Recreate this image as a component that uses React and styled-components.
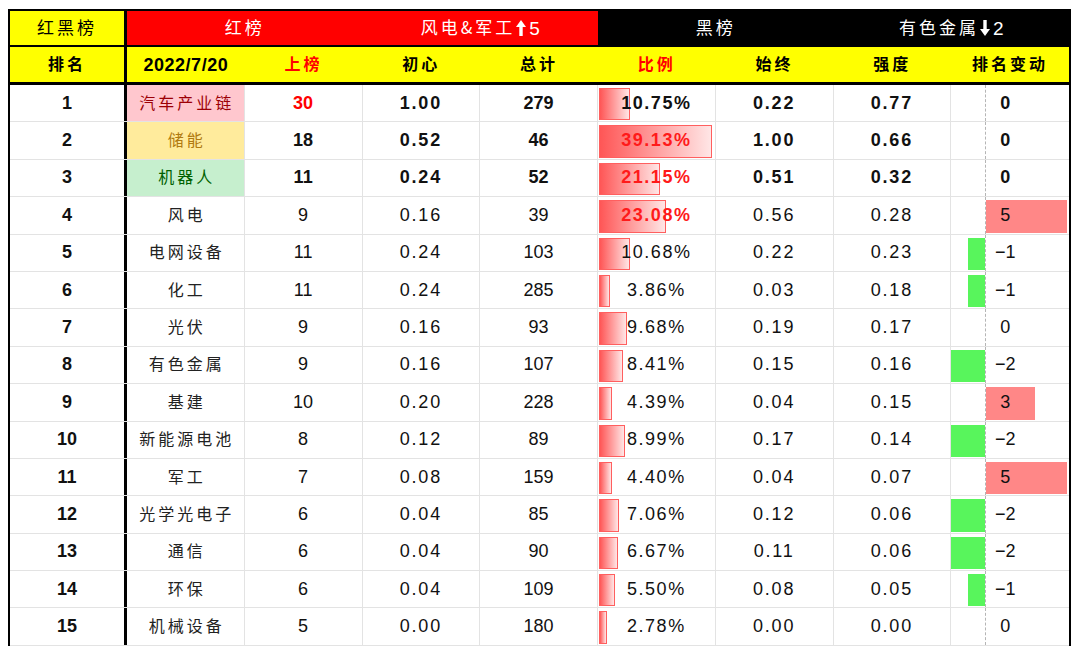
import React from 'react';
import styled, {createGlobalStyle} from 'styled-components';

const GlobalStyle = createGlobalStyle`
  body {
    margin: 0;
    background: #fff;
    font-family: "Liberation Sans", "Noto Sans CJK SC", sans-serif;
  }
`

const COLS = '117px repeat(8, 117.75px)'

const rows = [
    {rank: 1, name: '汽车产业链', tone: 'pink', up: 30, chu: '1.00', total: 279, pct: '10.75', shi: '0.22', qiang: '0.77', chg: 0},
    {rank: 2, name: '储能', tone: 'yellow', up: 18, chu: '0.52', total: 46, pct: '39.13', shi: '1.00', qiang: '0.66', chg: 0},
    {rank: 3, name: '机器人', tone: 'green', up: 11, chu: '0.24', total: 52, pct: '21.15', shi: '0.51', qiang: '0.32', chg: 0},
    {rank: 4, name: '风电', up: 9, chu: '0.16', total: 39, pct: '23.08', shi: '0.56', qiang: '0.28', chg: 5},
    {rank: 5, name: '电网设备', up: 11, chu: '0.24', total: 103, pct: '10.68', shi: '0.22', qiang: '0.23', chg: -1},
    {rank: 6, name: '化工', up: 11, chu: '0.24', total: 285, pct: '3.86', shi: '0.03', qiang: '0.18', chg: -1},
    {rank: 7, name: '光伏', up: 9, chu: '0.16', total: 93, pct: '9.68', shi: '0.19', qiang: '0.17', chg: 0},
    {rank: 8, name: '有色金属', up: 9, chu: '0.16', total: 107, pct: '8.41', shi: '0.15', qiang: '0.16', chg: -2},
    {rank: 9, name: '基建', up: 10, chu: '0.20', total: 228, pct: '4.39', shi: '0.04', qiang: '0.15', chg: 3},
    {rank: 10, name: '新能源电池', up: 8, chu: '0.12', total: 89, pct: '8.99', shi: '0.17', qiang: '0.14', chg: -2},
    {rank: 11, name: '军工', up: 7, chu: '0.08', total: 159, pct: '4.40', shi: '0.04', qiang: '0.07', chg: 5},
    {rank: 12, name: '光学光电子', up: 6, chu: '0.04', total: 85, pct: '7.06', shi: '0.12', qiang: '0.06', chg: -2},
    {rank: 13, name: '通信', up: 6, chu: '0.04', total: 90, pct: '6.67', shi: '0.11', qiang: '0.06', chg: -2},
    {rank: 14, name: '环保', up: 6, chu: '0.04', total: 109, pct: '5.50', shi: '0.08', qiang: '0.05', chg: -1},
    {rank: 15, name: '机械设备', up: 5, chu: '0.00', total: 180, pct: '2.78', shi: '0.00', qiang: '0.00', chg: 0},
]

const tones = {
    pink: {bg: '#ffc7ce', fg: '#9c0006'},
    yellow: {bg: '#ffeb9c', fg: '#b07a10'},
    green: {bg: '#c6efce', fg: '#006100'},
}

// thick arrow used in the title row
const Arrow = ({down}) => (
    <ArrowSvg viewBox="0 0 10 16" width="10" height="16">
        <g transform={down ? 'rotate(180 5 8)' : undefined} fill="#fff">
            <polygon points="0,7 5,0 10,7"/>
            <rect x="3.3" y="6" width="3.4" height="10"/>
        </g>
    </ArrowSvg>
)

const App = () => {
    return (
        <Page>
            <GlobalStyle/>
            <Table>
                <TitleRow>
                    <TitleCell bg="#ffff00" fg="#000" first>红黑榜</TitleCell>
                    <TitleCell bg="#ff0000" fg="#fff">红榜</TitleCell>
                    <TitleCell bg="#ff0000" fg="#fff">风电&amp;军工<Arrow/><Digit>5</Digit></TitleCell>
                    <TitleCell bg="#000" fg="#fff">黑榜</TitleCell>
                    <TitleCell bg="#000" fg="#fff">有色金属<Arrow down/><Digit>2</Digit></TitleCell>
                </TitleRow>
                <HeadRow>
                    <HeadCell first>排名</HeadCell>
                    <HeadCell latin>2022/7/20</HeadCell>
                    <HeadCell red>上榜</HeadCell>
                    <HeadCell>初心</HeadCell>
                    <HeadCell>总计</HeadCell>
                    <HeadCell red>比例</HeadCell>
                    <HeadCell>始终</HeadCell>
                    <HeadCell>强度</HeadCell>
                    <HeadCell>排名变动</HeadCell>
                </HeadRow>
                {rows.map(row => {
                    const strong = row.rank <= 3
                    const tone = tones[row.tone]
                    return (
                        <Row key={row.rank}>
                            <RankCell>{row.rank}</RankCell>
                            <NameCell bg={tone ? tone.bg : '#fff'} fg={tone ? tone.fg : '#222'}>
                                {row.name}
                            </NameCell>
                            <NumCell strong={strong} red={row.rank === 1}>{row.up}</NumCell>
                            <NumCell strong={strong} spaced>{row.chu}</NumCell>
                            <NumCell strong={strong}>{row.total}</NumCell>
                            <RatioCell>
                                <RatioBar style={{width: `${parseFloat(row.pct) / 39.13 * 113}px`}}/>
                                <RatioText strong={row.rank <= 4} red={row.rank >= 2 && row.rank <= 4}>
                                    {row.pct}%
                                </RatioText>
                            </RatioCell>
                            <NumCell strong={strong} spaced>{row.shi}</NumCell>
                            <NumCell strong={strong} spaced>{row.qiang}</NumCell>
                            <ChangeCell>
                                <DownSide>
                                    {row.chg < 0 && <DownBar style={{width: `${-row.chg * 17}px`}}/>}
                                </DownSide>
                                <UpSide>
                                    {row.chg > 0 && <UpBar style={{width: `${row.chg * 16.2}px`}}/>}
                                    <ChangeText strong={strong}>{row.chg < 0 ? `−${-row.chg}` : row.chg}</ChangeText>
                                </UpSide>
                            </ChangeCell>
                        </Row>
                    )
                })}
            </Table>
        </Page>
    );
};

const Page = styled.div`
  padding: 9px 0 0 8px;
  height: 652px;
  box-sizing: border-box;
  overflow: hidden;
`

const Table = styled.div`
  width: 1063px;
  border: 2px solid #000;
  border-bottom: none;
  box-sizing: border-box;
  background: #fff;
`

const TitleRow = styled.div`
  display: grid;
  grid-template-columns: 117px repeat(4, 235.5px);
  height: 34px;
  border-bottom: 2px solid #000;
`

const TitleCell = styled.div`
  display: flex;
  align-items: center;
  justify-content: center;
  background: ${p => p.bg};
  color: ${p => p.fg};
  font-family: "Noto Sans CJK SC", "Liberation Sans", sans-serif;
  font-size: 17px;
  line-height: 1;
  letter-spacing: 3px;
  padding-bottom: 3px;
  box-sizing: border-box;
  border-right: ${p => p.first ? '3px solid #000' : 'none'};
`

const ArrowSvg = styled.svg`
  display: block;
  margin: 2px 3px 0 1px;
`

const Digit = styled.span`
  font-family: "Liberation Sans", sans-serif;
  font-size: 19px;
  letter-spacing: 0;
  margin-top: 3px;
`

const HeadRow = styled.div`
  display: grid;
  grid-template-columns: ${COLS};
  height: 35px;
  background: #ffff00;
  border-bottom: 3px solid #000;
`

const HeadCell = styled.div`
  display: flex;
  align-items: center;
  justify-content: center;
  box-sizing: border-box;
  border-right: ${p => p.first ? '3px solid #000' : 'none'};
  color: ${p => p.red ? '#ff0000' : '#000'};
  font-family: ${p => p.latin ? '"Liberation Sans", sans-serif' : '"Noto Sans CJK SC", sans-serif'};
  font-weight: bold;
  font-size: ${p => p.latin ? '18px' : '16px'};
  line-height: 1;
  letter-spacing: ${p => p.latin ? '0.5px' : '3px'};
  padding-bottom: ${p => p.latin ? '0' : '3px'};
`

const Row = styled.div`
  display: grid;
  grid-template-columns: ${COLS};
  height: 37.4px;
  box-sizing: border-box;
  border-bottom: 1px solid #e3e3e3;
`

const Cell = styled.div`
  display: flex;
  align-items: center;
  justify-content: center;
  box-sizing: border-box;
  border-right: 1px solid #e3e3e3;
  font-size: 18px;
  color: #111;
  min-width: 0;
`

const RankCell = styled(Cell)`
  border-right: 3px solid #000;
  font-weight: bold;
`

const NameCell = styled(Cell)`
  background: ${p => p.bg};
  color: ${p => p.fg};
  font-family: "Noto Sans CJK SC", sans-serif;
  font-size: 16px;
  line-height: 1;
  letter-spacing: 3px;
  padding: 0 0 3px 3px;
`

const NumCell = styled(Cell)`
  font-weight: ${p => p.strong ? 'bold' : 'normal'};
  color: ${p => p.red ? '#ff0000' : '#111'};
  letter-spacing: ${p => p.spaced ? '1.8px' : '0'};
`

const RatioCell = styled(Cell)`
  position: relative;
`

const RatioBar = styled.div`
  position: absolute;
  left: 1px;
  top: 3px;
  bottom: 1px;
  box-sizing: border-box;
  border: 1px solid #ff5f5f;
  background: linear-gradient(to right, #ff5656, #ffe6e6);
`

const RatioText = styled.span`
  position: relative;
  font-weight: ${p => p.strong ? 'bold' : 'normal'};
  color: ${p => p.red ? '#ff1a1a' : '#111'};
  letter-spacing: 1.5px;
`

const ChangeCell = styled(Cell)`
  border-right: none;
  justify-content: flex-start;
  align-items: stretch;
`

const DownSide = styled.div`
  width: 35px;
  display: flex;
  justify-content: flex-end;
  border-right: 1px dashed #b5b5b5;
  padding: 3px 0 1px;
  box-sizing: border-box;
`

const DownBar = styled.div`
  background: #58f55c;
  height: 100%;
`

const UpSide = styled.div`
  position: relative;
  flex: 1;
  display: flex;
  align-items: center;
`

const UpBar = styled.div`
  position: absolute;
  left: 0;
  top: 3px;
  bottom: 1px;
  background: #ff8787;
`

const ChangeText = styled.span`
  position: relative;
  width: 38px;
  text-align: center;
  font-weight: ${p => p.strong ? 'bold' : 'normal'};
`

export default App;
